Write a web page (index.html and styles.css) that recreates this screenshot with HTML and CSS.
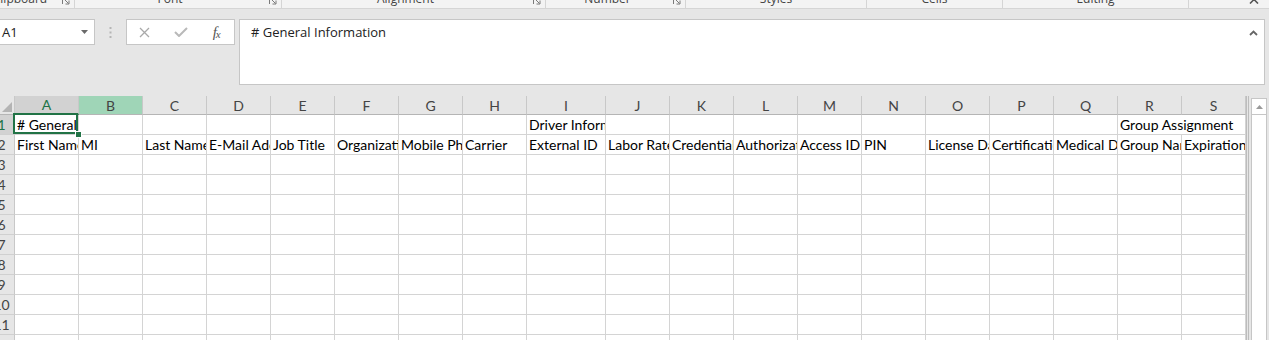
FILE: index.html
```html
<!DOCTYPE html>
<html lang="en">
<head>
  <meta charset="UTF-8">
  <title>Book1 - Excel</title>
  <link rel="stylesheet" href="styles.css">
</head>
<body>
  <div class="ribbon-groups">
    <div class="group g-clipboard"><span class="group-label">Clipboard</span><span class="launcher"><svg width="8" height="8" viewBox="0 0 8 8"><path d="M0.5 7V0.5H7M2.5 2.5l4 4M7 3.5v3.5H3.5" fill="none" stroke="#7a7a7a"/></svg></span></div>
    <div class="group g-font"><span class="group-label">Font</span><span class="launcher"><svg width="8" height="8" viewBox="0 0 8 8"><path d="M0.5 7V0.5H7M2.5 2.5l4 4M7 3.5v3.5H3.5" fill="none" stroke="#7a7a7a"/></svg></span></div>
    <div class="group g-align"><span class="group-label">Alignment</span><span class="launcher"><svg width="8" height="8" viewBox="0 0 8 8"><path d="M0.5 7V0.5H7M2.5 2.5l4 4M7 3.5v3.5H3.5" fill="none" stroke="#7a7a7a"/></svg></span></div>
    <div class="group g-number"><span class="group-label">Number</span><span class="launcher"><svg width="8" height="8" viewBox="0 0 8 8"><path d="M0.5 7V0.5H7M2.5 2.5l4 4M7 3.5v3.5H3.5" fill="none" stroke="#7a7a7a"/></svg></span></div>
    <div class="group g-styles"><span class="group-label">Styles</span></div>
    <div class="group g-cells"><span class="group-label">Cells</span></div>
    <div class="group g-editing"><span class="group-label">Editing</span></div>
    <span class="collapse"><svg width="10" height="6" viewBox="0 0 10 6"><path d="M1 5.5l4-4 4 4" fill="none" stroke="#555" stroke-width="1.6"/></svg></span>
  </div>

  <div class="formula-row">
    <div class="name-box">
      <span>A1</span>
      <svg width="7" height="4" viewBox="0 0 7 4"><path d="M0 0h7L3.5 4z" fill="#6a6a6a"/></svg>
    </div>
    <div class="grip">
      <svg width="3" height="11" viewBox="0 0 3 11"><rect x="0.5" y="0" width="2" height="2" fill="#b5b5b5"/><rect x="0.5" y="4.5" width="2" height="2" fill="#b5b5b5"/><rect x="0.5" y="9" width="2" height="2" fill="#b5b5b5"/></svg>
    </div>
    <div class="fx-box">
      <span class="fx-btn"><svg width="11" height="11" viewBox="0 0 11 11"><path d="M1 1l9 9M10 1l-9 9" stroke="#a9a9a9" stroke-width="1.3"/></svg></span>
      <span class="fx-btn"><svg width="14" height="10" viewBox="0 0 14 10"><path d="M1 5l4 4 8-8" fill="none" stroke="#b9b9b9" stroke-width="2"/></svg></span>
      <span class="fx-btn fx">f<i>x</i></span>
    </div>
    <div class="formula-input">
      <span class="formula-text"># General Information</span>
      <svg class="caret" width="9" height="6" viewBox="0 0 9 6"><path d="M1 5l3.5-3.5L8 5" fill="none" stroke="#666" stroke-width="1.8"/></svg>
    </div>
  </div>

  <div class="sheet">
    <div class="grid" id="grid">
      <div class="row head">
        <div class="corner"><svg width="10" height="10" viewBox="0 0 10 10"><path d="M10 0V10H0z" fill="#b4b4b4"/></svg></div>
        <div class="ch sel">A</div>
        <div class="ch hover">B</div>
        <div class="ch">C</div>
        <div class="ch">D</div>
        <div class="ch">E</div>
        <div class="ch">F</div>
        <div class="ch">G</div>
        <div class="ch">H</div>
        <div class="ch wide">I</div>
        <div class="ch">J</div>
        <div class="ch">K</div>
        <div class="ch">L</div>
        <div class="ch">M</div>
        <div class="ch">N</div>
        <div class="ch">O</div>
        <div class="ch">P</div>
        <div class="ch">Q</div>
        <div class="ch">R</div>
        <div class="ch">S</div>
      </div>
      <div class="row">
        <div class="rh sel"><span>1</span></div>
        <div class="c active"><span class="clip"># General Information</span></div>
        <div class="c"></div>
        <div class="c"></div>
        <div class="c"></div>
        <div class="c"></div>
        <div class="c"></div>
        <div class="c"></div>
        <div class="c"></div>
        <div class="c wide">Driver Information</div>
        <div class="c"></div>
        <div class="c"></div>
        <div class="c"></div>
        <div class="c"></div>
        <div class="c"></div>
        <div class="c"></div>
        <div class="c"></div>
        <div class="c"></div>
        <div class="c span2">Group Assignment</div>
      </div>
      <div class="row">
        <div class="rh"><span>2</span></div>
        <div class="c">First Name</div>
        <div class="c">MI</div>
        <div class="c">Last Name</div>
        <div class="c">E-Mail Address</div>
        <div class="c">Job Title</div>
        <div class="c">Organization</div>
        <div class="c">Mobile Phone</div>
        <div class="c">Carrier</div>
        <div class="c wide">External ID</div>
        <div class="c">Labor Rate</div>
        <div class="c">Credential</div>
        <div class="c">Authorization</div>
        <div class="c">Access ID Type</div>
        <div class="c">PIN</div>
        <div class="c">License Date</div>
        <div class="c">Certification</div>
        <div class="c">Medical Date</div>
        <div class="c">Group Name</div>
        <div class="c">Expiration Date</div>
      </div>
    </div>
    <div class="edge"></div>
    <div class="vscroll">
      <div class="vs-up"><svg width="7" height="4" viewBox="0 0 7 4"><path d="M0 4h7L3.5 0z" fill="#9a9a9a"/></svg></div>
    </div>
  </div>

  <script>
    // empty rows below the header rows
    const grid = document.getElementById('grid');
    for (let n = 3; n <= 12; n++) {
      const row = document.createElement('div');
      row.className = 'row';
      let html = `<div class="rh"><span>${n}</span></div>`;
      for (let i = 0; i < 19; i++) {
        html += `<div class="c${i === 8 ? ' wide' : ''}"></div>`;
      }
      row.innerHTML = html;
      grid.appendChild(row);
    }
  </script>
</body>
</html>
```

FILE: styles.css
```css
body { margin: 0; width: 1269px; height: 340px; overflow: hidden; background: #e6e6e6; font-family: Lato, "Liberation Sans", sans-serif; }

/* ribbon group captions, mostly scrolled off */
.ribbon-groups { display: flex; height: 8px; background: #f3f3f3; border-bottom: 1px solid #d5d5d5; overflow: hidden; font: 12px/16px "Open Sans", sans-serif; color: #444; }
.group { display: flex; flex: none; box-sizing: border-box; height: 8px; border-right: 1px solid #d5d5d5; }
.group-label { flex: 1; text-align: center; margin-top: -9px; white-space: nowrap; }
.launcher { width: 16px; display: flex; justify-content: center; }
.launcher svg { margin-top: -3px; }
.g-clipboard { margin-left: -18px; width: 93px; }
.g-font { width: 207px; }
.g-align { width: 264px; }
.g-number { width: 140px; }
.g-styles { width: 181px; }
.g-cells { width: 136px; }
.g-editing { width: 186px; }
.collapse { margin-left: 60px; }
.collapse svg { margin-top: -2px; display: block; }

/* name box + formula bar */
.formula-row { display: flex; align-items: flex-start; height: 77px; padding-top: 10px; font: 13px "Open Sans", sans-serif; color: #222; }
.name-box { margin-left: -2px; width: 97px; height: 26px; box-sizing: border-box; background: #fff; border: 1px solid #c6c6c6; display: flex; align-items: center; justify-content: space-between; padding: 0 6px 0 3px; }
.grip { width: 31px; display: flex; justify-content: center; padding-top: 8px; }
.fx-box { width: 109px; height: 26px; box-sizing: border-box; background: #fff; border: 1px solid #c6c6c6; display: flex; }
.fx-btn { width: 36px; display: flex; align-items: center; justify-content: center; }
.fx { font: italic 15px "Liberation Serif", serif; color: #555; letter-spacing: -1px; }
.fx i { font-size: 11px; margin-top: 3px; }
.formula-input { margin-left: 4px; width: 1026px; height: 66px; box-sizing: border-box; background: #fff; border: 1px solid #c6c6c6; display: flex; align-items: flex-start; padding: 3px 6px 0 11px; }
.formula-text { flex: 1; line-height: 18px; }
.caret { margin-top: 7px; }

/* worksheet */
.sheet { display: flex; height: 244px; }
.grid { width: 1246px; background: #fff; overflow: hidden; }
.row { display: flex; height: 20px; }
.row > div { flex: none; box-sizing: border-box; border-right: 1px solid #d4d4d4; border-bottom: 1px solid #d4d4d4; }
.c { width: 64px; padding-left: 2px; font-size: 14px; line-height: 19px; white-space: nowrap; overflow: hidden; color: #000; }
.wide { width: 79px !important; }
.span2 { width: 128px; }
.c.active { position: relative; overflow: visible; }
.clip { display: block; overflow: hidden; }
.c.active::after { content: ""; position: absolute; left: -2px; top: -2px; right: 0; bottom: 0; border: 2px solid #217346; }
.c.active::before { content: ""; position: absolute; right: -4px; bottom: -4px; width: 5px; height: 5px; background: #217346; border: 1px solid #fff; z-index: 1; }

.head { height: 19px; background: #e6e6e6; }
.head > div { border-right-color: #c8c8c8; border-bottom-color: #b5b5b5; }
.corner { width: 15px; display: flex; align-items: flex-end; justify-content: flex-end; padding: 0 2px 2px 0; }
.ch { width: 64px; text-align: center; font-size: 14px; line-height: 19px; color: #444; }
.ch.sel { background: #d2d2d2; color: #217346; border-bottom: 2px solid #217346 !important; line-height: 18px; }
.ch.hover { background: #9fd5b7; }

.rh { width: 15px; background: #e6e6e6; overflow: hidden; border-right-color: #c8c8c8 !important; border-bottom-color: #d0d0d0 !important; }
.rh span { display: block; width: 25px; margin-left: -11px; text-align: center; font-size: 14px; line-height: 19px; color: #444; }
.rh.sel { background: #d2d2d2; }
.rh.sel span { color: #217346; }

.edge { width: 5px; box-sizing: border-box; border-left: 3px double #bdbdbd; }
.vscroll { width: 16px; height: 250px; margin-top: 2px; box-sizing: border-box; background: #fff; border: 1px solid #c6c6c6; }
.vs-up { height: 15px; border-bottom: 1px solid #c6c6c6; display: flex; align-items: center; justify-content: center; }
```
